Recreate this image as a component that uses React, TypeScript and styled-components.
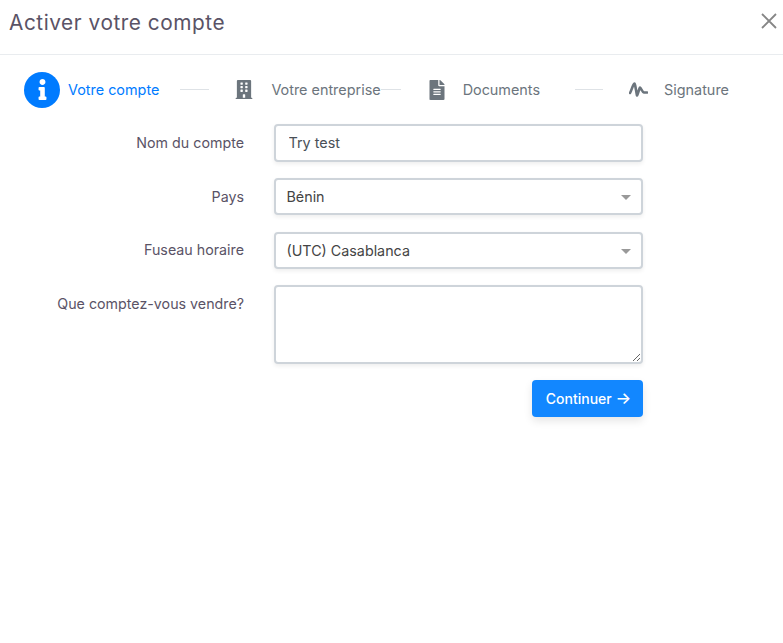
import React from "react";
import styled, { createGlobalStyle } from "styled-components";
import { FaBuilding, FaFileAlt, FaInfo } from "react-icons/fa";

const Global = createGlobalStyle`
  html, body { margin: 0; padding: 0; background: #fff; }
  body { font-family: Inter, "Liberation Sans", sans-serif; color: #495057; }
  * { box-sizing: border-box; }
`;

const Page = styled.div`
  width: 783px;
  height: 643px;
  background: #fff;
  overflow: hidden;
`;

const Header = styled.header`
  height: 55px;
  border-bottom: 1px solid #e9ecef;
  display: flex;
  justify-content: space-between;
  padding: 10px 5px 0 9px;
`;

const Title = styled.h1`
  margin: 0;
  font-size: 20.8px;
  line-height: 26px;
  font-weight: 400;
  letter-spacing: 0.55px;
  color: #5a5366;
`;

const Close = styled.button`
  width: 18px;
  height: 18px;
  padding: 0;
  margin-top: 2px;
  border: 0;
  background: none;
  color: #868686;
  display: flex;
`;

const Stepper = styled.nav`
  display: flex;
  align-items: center;
  height: 35px;
  margin: 17px 0 17px 24px;
`;

const StepIcon = styled.span<{ $w: number; $ml: number; $mr: number }>`
  width: ${(p) => p.$w}px;
  margin-left: ${(p) => p.$ml}px;
  margin-right: ${(p) => p.$mr}px;
  display: flex;
  justify-content: center;
  color: #6c757d;
  flex: none;
`;

const ActiveCircle = styled.span`
  width: 36px;
  height: 36px;
  margin-right: 8px;
  border-radius: 50%;
  background: #007bff;
  color: #fff;
  display: flex;
  align-items: center;
  justify-content: center;
  flex: none;
`;

const StepLabel = styled.span<{ $active?: boolean }>`
  font-size: 14.4px;
  line-height: 20px;
  white-space: nowrap;
  color: ${(p) => (p.$active ? "#007bff" : "#6c757d")};
  flex: none;
`;

const Connector = styled.span<{ $w: number; $ml: number }>`
  width: ${(p) => p.$w}px;
  margin-left: ${(p) => p.$ml}px;
  height: 1px;
  background: #dee2e6;
  flex: none;
`;

const Form = styled.form`
  width: 643px;
  display: grid;
  grid-template-columns: 244px 369px;
  column-gap: 30px;
  align-items: start;
`;

const Label = styled.label<{ $h: number; $pt?: number }>`
  text-align: right;
  font-size: 14.25px;
  line-height: 20px;
  padding-top: ${(p) => p.$pt ?? 9}px;
  height: ${(p) => p.$h}px;
  color: #5a5366;
`;

const Field = styled.div<{ $h: number }>`
  height: ${(p) => p.$h}px;
`;

const TextInput = styled.input`
  width: 100%;
  height: 38px;
  padding: 0 12.5px 2px;
  border: 2px solid #ced4da;
  border-radius: 4px;
  background: #fff;
  font: 14.4px Inter, sans-serif;
  color: #495057;
  outline: none;
  box-shadow: 0 2px 4px rgba(0, 0, 0, 0.07);
`;

const Select = styled.div`
  position: relative;
  width: 100%;
  height: 37px;
  padding: 0 10.5px;
  border: 2px solid #ced4da;
  border-radius: 4px;
  background: #fff;
  font-size: 14.3px;
  line-height: 33px;
  color: #444;
  box-shadow: 0 2px 4px rgba(0, 0, 0, 0.07);
`;

const Caret = styled.span`
  position: absolute;
  right: 10px;
  top: 15px;
  width: 0;
  height: 0;
  border-left: 5px solid transparent;
  border-right: 5px solid transparent;
  border-top: 5px solid #999;
`;

const TextArea = styled.textarea`
  display: block;
  width: 100%;
  height: 79px;
  border: 2px solid #ced4da;
  border-radius: 4px;
  background: #fff;
  outline: none;
  resize: vertical;
  box-shadow: 0 2px 4px rgba(0, 0, 0, 0.07);
`;

const Actions = styled.div`
  grid-column: 2;
  display: flex;
  justify-content: flex-end;
`;

const Button = styled.button`
  height: 37px;
  width: 111px;
  padding: 0 0 0 2px;
  border: 0;
  border-radius: 4px;
  background: #1287ff;
  color: #fff;
  font: 500 14px Inter, sans-serif;
  box-shadow: 0 4px 8px rgba(0, 0, 0, 0.1);
`;

const Arrow = styled.span`
  font-size: 16.5px;
  line-height: 1;
`;

const SignatureIcon = () => (
  <svg width="19" height="15" viewBox="0 0 19 15" fill="none" stroke="currentColor" strokeWidth="2.6" strokeLinecap="round" strokeLinejoin="round">
    <path d="M1 11 C2.5 9 3.5 3 5.5 1.5 C6.5 3 7 9 8 13.5 C9 12 10 7 11 5.5 C12.5 6.5 13 10 15 10.5 L18 10.5" />
  </svg>
);

export default function App() {
  return (
    <Page>
      <Global />
      <Header>
        <Title>Activer votre compte</Title>
        <Close aria-label="Fermer">
          <svg width="18" height="18" viewBox="0 0 18 18" stroke="currentColor" strokeWidth="1.8" fill="none">
            <path d="M2 2 L16 16 M16 2 L2 16" />
          </svg>
        </Close>
      </Header>
      <Stepper>
        <ActiveCircle><FaInfo size={21} /></ActiveCircle>
        <StepLabel $active>Votre compte</StepLabel>
        <Connector $w={29} $ml={21} />
        <StepIcon $w={18} $ml={26} $mr={18}><FaBuilding size={19} /></StepIcon>
        <StepLabel>Votre entreprise</StepLabel>
        <Connector $w={20} $ml={0} />
        <StepIcon $w={16} $ml={28} $mr={18}><FaFileAlt size={20} /></StepIcon>
        <StepLabel>Documents</StepLabel>
        <Connector $w={28} $ml={35} />
        <StepIcon $w={19} $ml={26} $mr={16}><SignatureIcon /></StepIcon>
        <StepLabel>Signature</StepLabel>
      </Stepper>
      <Form>
        <Label $h={54}>Nom du compte</Label>
        <Field $h={54}><TextInput defaultValue="Try test" /></Field>
        <Label $h={54}>Pays</Label>
        <Field $h={54}><Select>Bénin<Caret /></Select></Field>
        <Label $h={53} $pt={8}>Fuseau horaire</Label>
        <Field $h={53}><Select>(UTC) Casablanca<Caret /></Select></Field>
        <Label $h={95}>Que comptez-vous vendre?</Label>
        <Field $h={95}><TextArea /></Field>
        <Actions><Button type="button">Continuer <Arrow>→</Arrow></Button></Actions>
      </Form>
    </Page>
  );
}
